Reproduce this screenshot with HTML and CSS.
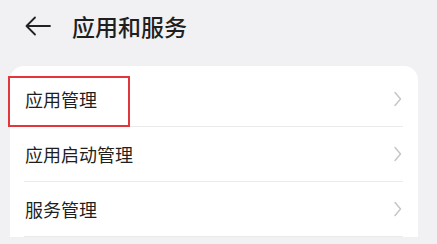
FILE: index.html
```html
<!DOCTYPE html>
<html lang="zh-CN">
<head>
<meta charset="utf-8">
<link rel="stylesheet" href="styles.css">
</head>
<body>
<div class="page">
  <header class="header">
    <svg class="back" width="26" height="20" viewBox="0 0 26 20">
      <path d="M1.5 10 H25 M10 1.5 L1.5 10 L10 18.5" fill="none" stroke="#222" stroke-width="1.8" stroke-linecap="round" stroke-linejoin="round"/>
    </svg>
    <h1 class="title">应用和服务</h1>
  </header>
  <section class="card">
    <div class="row">
      <span class="label">应用管理</span>
      <svg class="chev" width="8" height="16" viewBox="0 0 8 16"><path d="M1 1.5 L6.5 8 L1 14.5" fill="none" stroke="#c4c4c6" stroke-width="1.4" stroke-linecap="round" stroke-linejoin="round"/></svg>
      <div class="highlight"></div>
    </div>
    <div class="row">
      <span class="label">应用启动管理</span>
      <svg class="chev" width="8" height="16" viewBox="0 0 8 16"><path d="M1 1.5 L6.5 8 L1 14.5" fill="none" stroke="#c4c4c6" stroke-width="1.4" stroke-linecap="round" stroke-linejoin="round"/></svg>
    </div>
    <div class="row">
      <span class="label">服务管理</span>
      <svg class="chev" width="8" height="16" viewBox="0 0 8 16"><path d="M1 1.5 L6.5 8 L1 14.5" fill="none" stroke="#c4c4c6" stroke-width="1.4" stroke-linecap="round" stroke-linejoin="round"/></svg>
    </div>
  </section>
</div>
</body>
</html>
```
FILE: styles.css
```css
* { box-sizing: border-box; }
html, body {
  margin: 0;
  padding: 0;
  background: #f1f1f3;
  font-family: "Noto Sans CJK SC", "Noto Sans", sans-serif;
  color: #1f1f1f;
  overflow: hidden;
}
.page {
  width: 437px;
  height: 244px;
}
.header {
  display: flex;
  align-items: center;
  height: 52px;
  padding-left: 25px;
}
.back {
  display: block;
  margin-right: 21px;
}
.title {
  margin: 0;
  font-size: 23px;
  font-weight: 500;
  line-height: 1;
  letter-spacing: 0;
}
.card {
  margin: 14px 0 0 10px;
  width: 408px;
  background: #ffffff;
  border-radius: 14px 14px 0 0;
  padding: 6px 15px 0 14px;
}
.row {
  position: relative;
  display: flex;
  align-items: center;
  justify-content: space-between;
  height: 55px;
  border-bottom: 1px solid #ebebeb;
  padding-left: 1px;
  padding-right: 1px;
}
.label {
  font-size: 18px;
  line-height: 1;
}
.chev { display: block; }
.highlight {
  position: absolute;
  left: -16px;
  top: 4px;
  width: 122px;
  height: 51px;
  border: 2.5px solid #e2363c;
}
```
